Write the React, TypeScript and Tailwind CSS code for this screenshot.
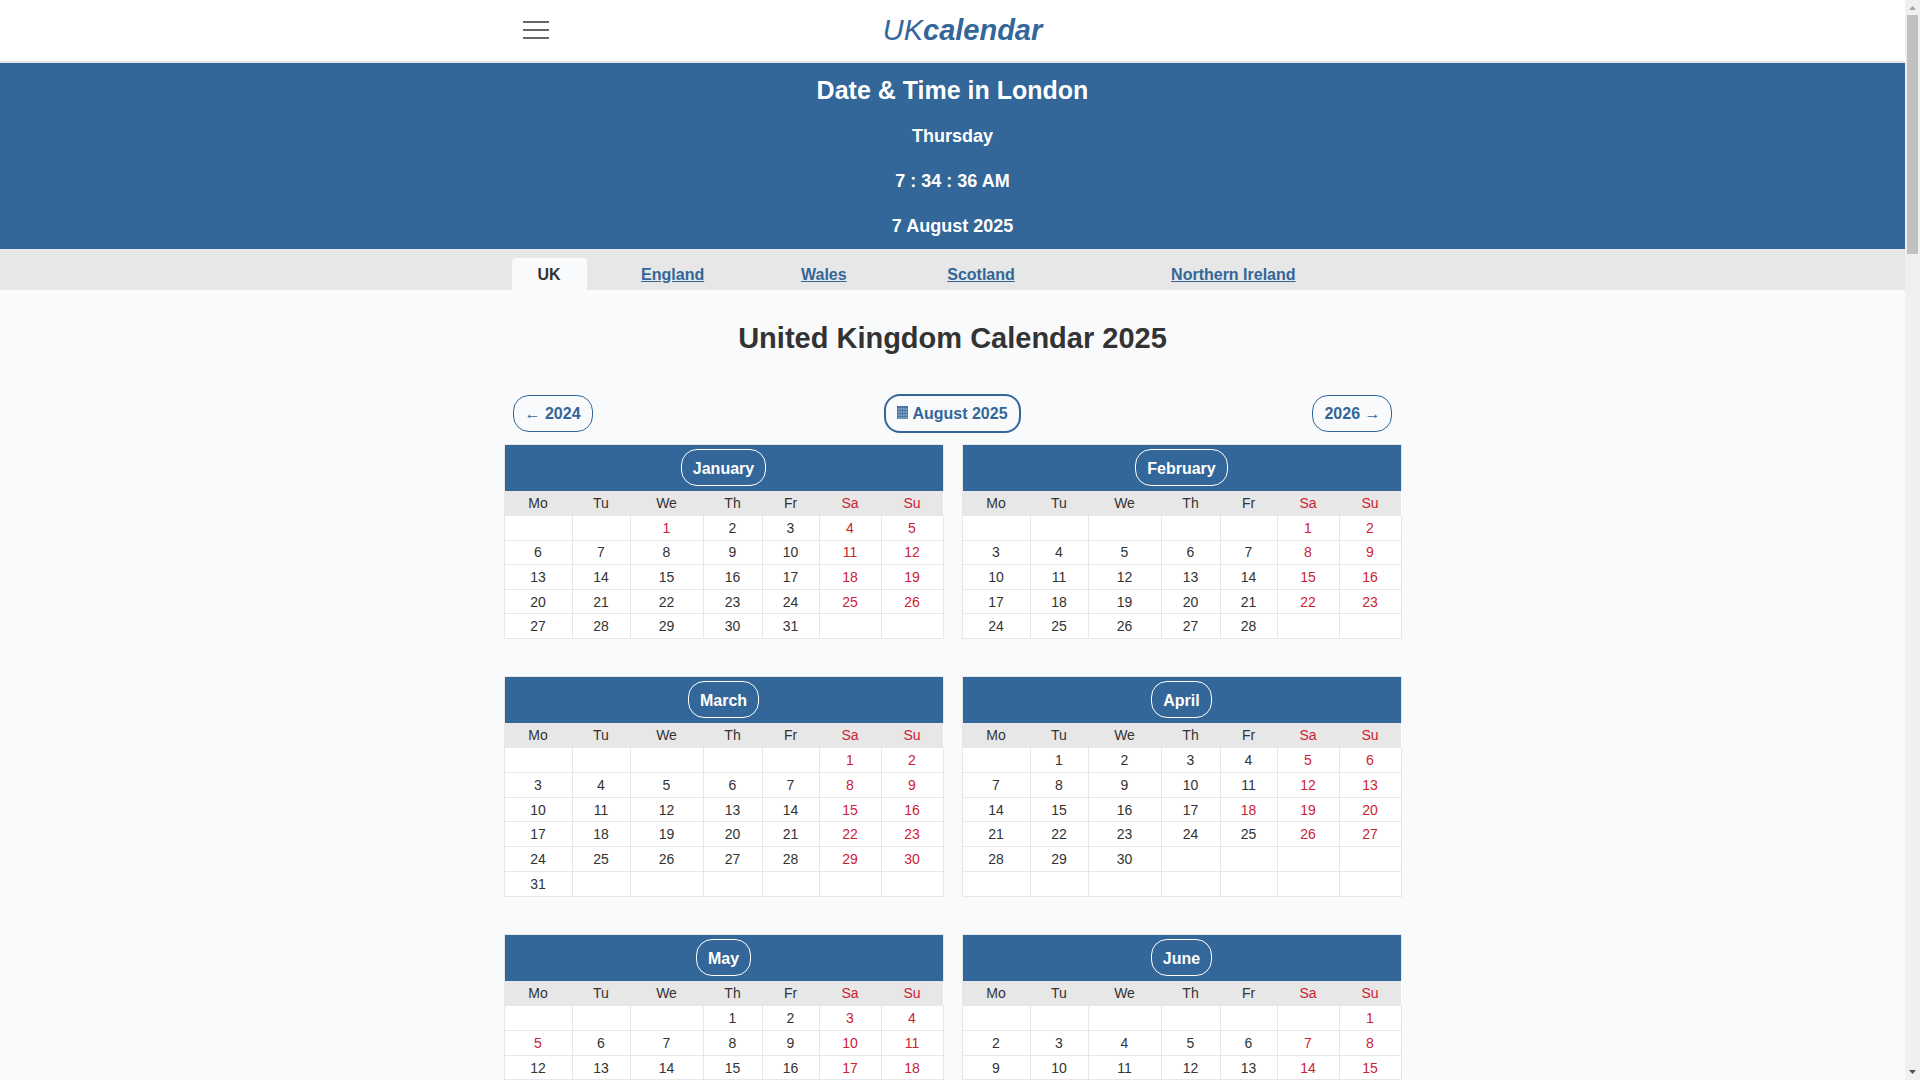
type Month = {
  name: string;
  offset: number; // blank cells before the 1st (weeks start on Monday)
  days: number;
  weeks: number;
  holidays: number[];
};

const months: Month[] = [
  { name: "January", offset: 2, days: 31, weeks: 5, holidays: [1] },
  { name: "February", offset: 5, days: 28, weeks: 5, holidays: [] },
  { name: "March", offset: 5, days: 31, weeks: 6, holidays: [] },
  { name: "April", offset: 1, days: 30, weeks: 6, holidays: [18] },
  { name: "May", offset: 3, days: 31, weeks: 6, holidays: [5, 26] },
  { name: "June", offset: 6, days: 30, weeks: 6, holidays: [] },
];

const weekdays = ["Mo", "Tu", "We", "Th", "Fr", "Sa", "Su"];
const tabs = ["England", "Wales", "Scotland", "Northern Ireland"];

function Header() {
  return (
    <header className="border-b-2 border-[#e7e7e7] bg-white">
      <div className="mx-auto flex h-[61px] max-w-[898px] items-center pb-[2px]">
        <button aria-label="Menu" className="flex h-full flex-col justify-center gap-[6px] px-[19px]">
          <span className="h-[2px] w-[26px] bg-[#666]" />
          <span className="h-[2px] w-[26px] bg-[#666]" />
          <span className="h-[2px] w-[26px] bg-[#666]" />
        </button>
        <div className="flex-1 pr-[44px] text-center">
          <a href="#" className="text-[29px] leading-[44px] text-[#336699] italic">
            UK<b>calendar</b>
          </a>
        </div>
      </div>
    </header>
  );
}

function Clock() {
  return (
    <section className="bg-[#336699] pt-2 pb-[9px] text-center font-bold text-white">
      <h2 className="mb-[14px] text-[25px] leading-[38px]">Date &amp; Time in London</h2>
      <div className="flex flex-col gap-[18px] text-[18px] leading-[27px]">
        <p>Thursday</p>
        <p>7 : 34 : 36 AM</p>
        <p>7 August 2025</p>
      </div>
    </section>
  );
}

function Tabs() {
  return (
    <nav className="bg-[#e7e7e7] pt-[9px]">
      <div className="mx-auto max-w-[898px] px-2">
        <div className="grid grid-cols-[75fr_172fr_130fr_184fr_320fr] text-center font-bold">
          <span className="rounded-t bg-[#f9fafc] pt-[5px] pb-[3px]">UK</span>
          {tabs.map((tab) => (
            <span key={tab} className="pt-[5px] pb-[3px]">
              <a href="#" className="text-[#336699] underline">{tab}</a>
            </span>
          ))}
        </div>
      </div>
    </nav>
  );
}

function CalendarIcon() {
  return (
    <svg width="12" height="13" viewBox="0 0 12 13" className="mr-[3px] mb-[2px]" aria-hidden="true">
      <rect width="11" height="13" fill="#336699" fillOpacity="0.6" />
      <path
        d="M0 .5h11M0 1.500h11M.5 0v13M10.5 0v13M3 0v13M5.5 0v13M8 0v13M0 4.500h11M0 7.500h11M0 10.5h11"
        stroke="#336699"
        strokeOpacity="0.6"
        fill="none"
      />
    </svg>
  );
}

function YearNav() {
  return (
    <div className="flex items-center justify-between px-[9px] font-bold text-[#336699]">
      <a href="#" className="rounded-2xl border border-[#336699] px-[11px] leading-[35px]">← 2024</a>
      <a href="#" className="flex items-center rounded-2xl border-2 border-[#336699] px-[11px] leading-[35px]">
        <CalendarIcon />
        August 2025
      </a>
      <a href="#" className="rounded-2xl border border-[#336699] px-[11px] leading-[35px]">2026 →</a>
    </div>
  );
}

/**
 * one month as a table. weekends and bank holidays are red,
 * cells outside the month stay blank.
 */
function MonthTable({ month }: { month: Month }) {
  const rows = Array.from({ length: month.weeks }, (_, w) =>
    weekdays.map((_, d) => w * 7 + d + 1 - month.offset)
  );

  return (
    <table className={`w-full table-fixed border-collapse bg-white text-center text-[14px] ${month.weeks === 6 ? "h-[221px]" : "h-[195px]"}`}>
      <colgroup>
        <col className="w-[68px]" />
        <col className="w-[58px]" />
        <col className="w-[73px]" />
        <col className="w-[59px]" />
        <col className="w-[57px]" />
        <col className="w-[62px]" />
        <col />
      </colgroup>
      <thead>
        <tr className="h-[46px]">
          <th colSpan={7} className="border border-b-0 border-[#e7e7e7] bg-[#336699] p-0">
            <a href="#" className="inline-block rounded-2xl border border-white px-[11px] pt-[7px] pb-1 align-middle text-base leading-6 font-bold text-white">
              {month.name}
            </a>
          </th>
        </tr>
        <tr className="h-[25px] bg-[#e7e7e7]">
          {weekdays.map((day, i) => (
            <th key={day} className={`p-0 leading-[22px] font-normal ${i > 4 ? "text-[#cc2233]" : ""}`}>
              {day}
            </th>
          ))}
        </tr>
      </thead>
      <tbody>
        {rows.map((row, w) => (
          <tr key={w}>
            {row.map((n, d) => (
              <td
                key={d}
                className={`border border-[#e7e7e7] p-0 leading-[22px] ${d > 4 || month.holidays.includes(n) ? "text-[#cc2233]" : ""}`}
              >
                {n > 0 && n <= month.days ? n : "\u00a0"}
              </td>
            ))}
          </tr>
        ))}
      </tbody>
    </table>
  );
}

function Scrollbar() {
  return (
    <div className="flex w-[15px] shrink-0 flex-col items-center bg-[#f0f0f0]" aria-hidden="true">
      <svg width="15" height="15" viewBox="0 0 15 15" className="shrink-0">
        <path d="M4 10h7L7.500 6z" fill="#a3a3a3" />
      </svg>
      <div className="w-[11px] flex-1">
        <div className="h-[22.8%] bg-[#c1c1c1]" />
      </div>
      <svg width="15" height="15" viewBox="0 0 15 15" className="shrink-0">
        <path d="M4 5h7L7.500 9z" fill="#505050" />
      </svg>
    </div>
  );
}

export default function App() {
  return (
    <div className="flex h-screen bg-[#f9fafc] font-['Liberation_Sans',Arial,sans-serif] text-base text-[#333]">
      <div className="flex-1 overflow-y-auto [scrollbar-width:none]">
        <Header />
        <Clock />
        <Tabs />
        <main className="mx-auto max-w-[898px]">
          <h1 className="mt-[26px] mb-[34px] text-center text-[29px] leading-[44px] font-bold">
            United Kingdom Calendar 2025
          </h1>
          <YearNav />
          <div className="mt-[11px] grid grid-cols-2 gap-x-[18px] gap-y-[37px]">
            {months.map((month) => (
              <MonthTable key={month.name} month={month} />
            ))}
          </div>
        </main>
      </div>
      <Scrollbar />
    </div>
  );
}
